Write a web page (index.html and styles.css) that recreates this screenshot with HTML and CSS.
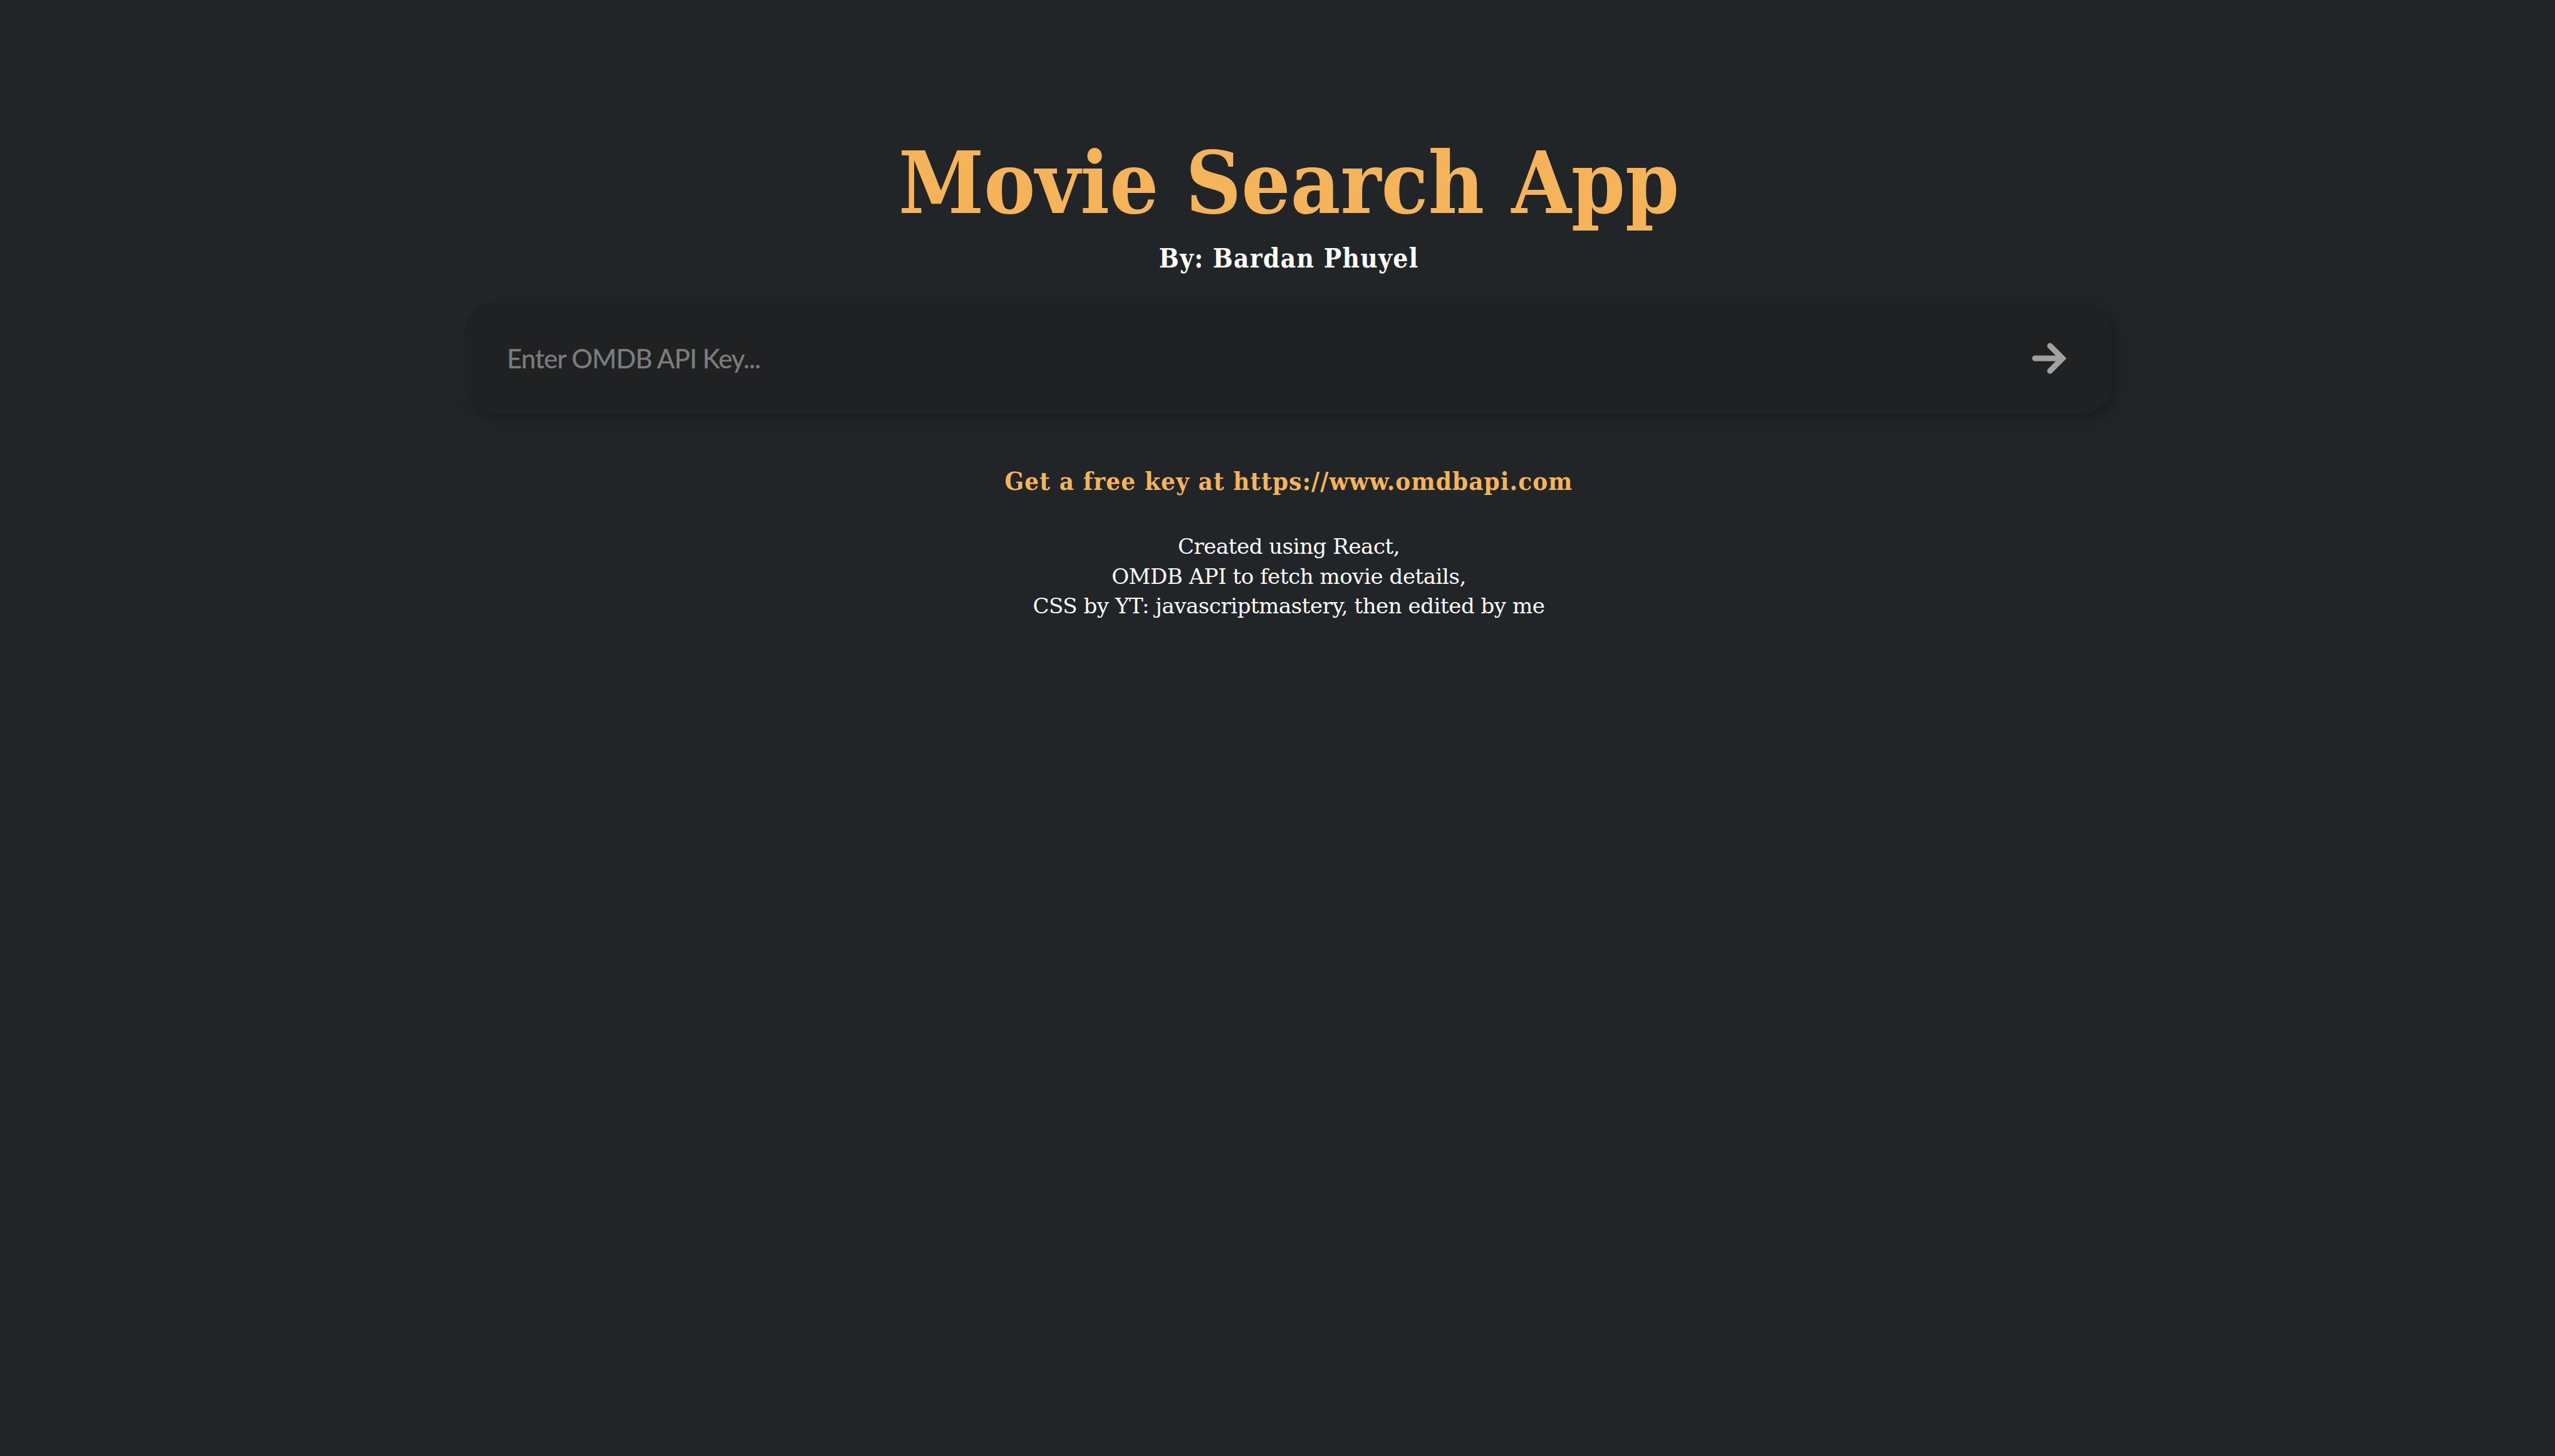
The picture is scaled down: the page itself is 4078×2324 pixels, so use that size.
FILE: index.html
```html
<!DOCTYPE html>
<html lang="en">
<head>
<meta charset="utf-8">
<title>Movie Search App</title>
<link rel="stylesheet" href="styles.css">
</head>
<body>
<div class="app">
  <h1 class="title">Movie Search App</h1>
  <h3 class="author">By: Bardan Phuyel</h3>
  <div class="search">
    <input class="search-input" type="text" placeholder="Enter OMDB API Key...">
    <svg class="search-icon" viewBox="0 0 60 60" width="60" height="60" aria-hidden="true">
      <path d="M7 30 H50 M31 10 L51 30 L31 50" fill="none" stroke="#a1a1a1" stroke-width="9" stroke-linecap="round" stroke-linejoin="miter"/>
    </svg>
  </div>
  <p class="free-key">Get a free key at https://www.omdbapi.com</p>
  <p class="credits">Created using React,<br>OMDB API to fetch movie details,<br>CSS by YT: javascriptmastery, then edited by me</p>
</div>
</body>
</html>
```

FILE: styles.css
```css
html, body {
  margin: 0;
  padding: 0;
}

body {
  background: #222528;
  min-height: 100vh;
  font-family: "DejaVu Serif", "Liberation Serif", serif;
  font-stretch: condensed;
  color: #ffffff;
}

.app {
  display: flex;
  flex-direction: column;
  align-items: center;
  padding: 210px 0 0 36px;
}

.title {
  margin: 0;
  font-size: 137px;
  line-height: 164px;
  font-weight: 700;
  color: #f5b35a;
  white-space: nowrap;
}

.author {
  margin: 14px 0 0;
  font-size: 42px;
  line-height: 50px;
  font-weight: 700;
  letter-spacing: 1.3px;
  color: #ffffff;
}

.search {
  margin-top: 45px;
  width: 2628px;
  height: 178px;
  box-sizing: border-box;
  display: flex;
  align-items: center;
  padding: 0 70px 0 66px;
  border-radius: 50px;
  background: #1f2123;
  box-shadow: 9px 9px 14px #1c1d1f, -9px -9px 14px #232629;
}

.search-input {
  flex: 1;
  border: none;
  outline: none;
  background: transparent;
  font-family: "Lato", "Open Sans", sans-serif;
  font-stretch: normal;
  font-size: 42px;
  font-weight: 500;
  letter-spacing: -1px;
  color: #a1a1a1;
  padding: 0;
}

.search-input::placeholder {
  color: #7b7b7b;
}

.search-icon {
  display: block;
  flex: none;
}

.free-key {
  margin: 83px 0 0;
  font-size: 40px;
  line-height: 48px;
  font-weight: 700;
  letter-spacing: 1.1px;
  color: #f5b35a;
}

.credits {
  margin: 57px 0 0;
  font-size: 34px;
  line-height: 47.5px;
  font-stretch: normal;
  letter-spacing: -0.45px;
  text-align: center;
  color: #ffffff;
}
```
